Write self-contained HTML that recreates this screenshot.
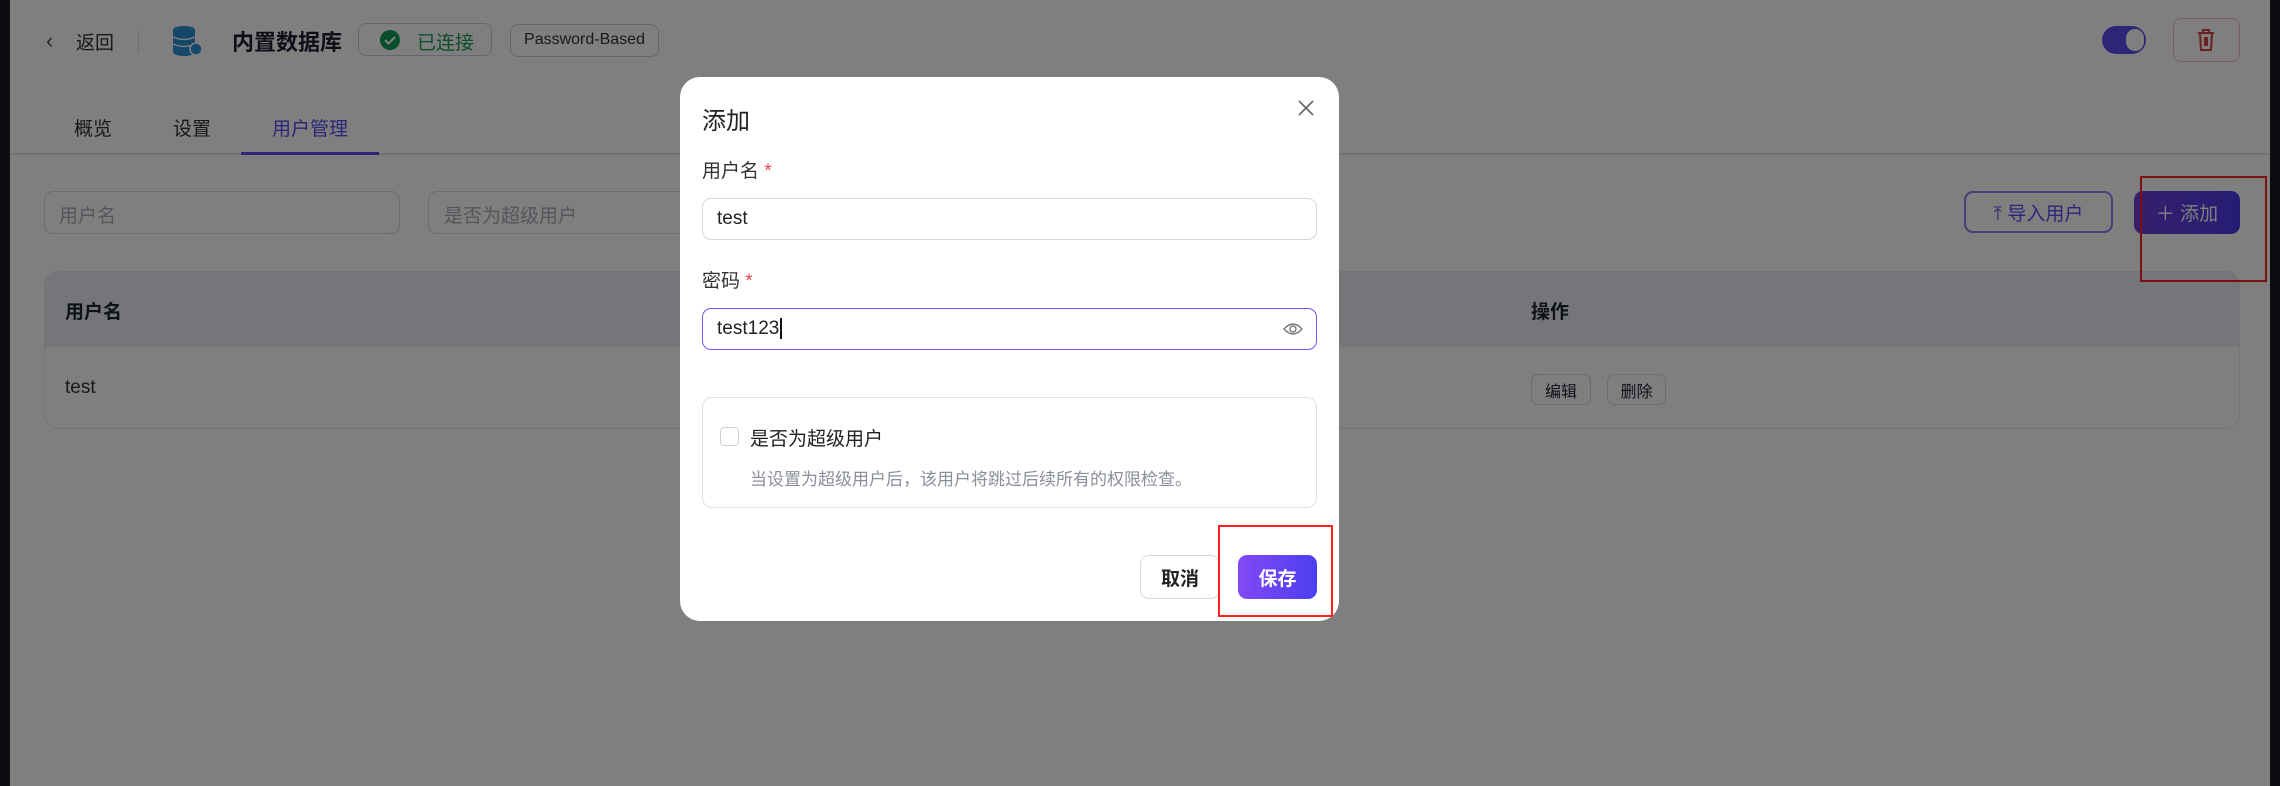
<!DOCTYPE html>
<html><head><meta charset="utf-8"><style>
*{box-sizing:border-box;margin:0;padding:0}
body{width:2280px;height:786px;overflow:hidden;position:relative;background:#fff;font-family:"Liberation Sans","Noto Sans CJK SC",sans-serif;color:#1f2333}
.a{position:absolute}
.inp{border:1.5px solid #d5d8e0;border-radius:9px;background:#fff}
.ph{color:#a9adb8;font-size:19px}
.btn{border-radius:9px;display:flex;align-items:center;justify-content:center;font-size:19px}
</style></head><body>
<div class="a" style="left:0;top:0;width:10px;height:786px;background:#161b26"></div>
<div class="a" style="right:0;top:0;width:10px;height:786px;background:#161b26"></div>
<div class="a" style="left:46px;top:28px;font-size:22px;color:#555">‹</div>
<div class="a" style="left:76px;top:28px;font-size:19px;color:#333">返回</div>
<div class="a" style="left:138px;top:30px;width:1px;height:22px;background:#ddd"></div>
<svg class="a" style="left:170px;top:25px" width="34" height="32" viewBox="0 0 34 32"><ellipse cx="14" cy="5" rx="11" ry="4" fill="#2a8fd0"/><rect x="3" y="5" width="22" height="22" fill="#2a8fd0"/><ellipse cx="14" cy="27" rx="11" ry="4" fill="#2a8fd0"/><path d="M3 12q11 5 22 0M3 19q11 5 22 0" stroke="#fff" stroke-width="1.5" fill="none"/><circle cx="26" cy="24" r="6" fill="#2a8fd0" stroke="#fff" stroke-width="1.5"/></svg>
<div class="a" style="left:232px;top:25px;font-size:22px;font-weight:bold;color:#1a1d2e">内置数据库</div>
<div class="a" style="left:358px;top:23px;width:134px;height:33px;border:1.5px solid #ccd;border-radius:8px;background:#fff"></div>
<svg class="a" style="left:380px;top:30px" width="20" height="20"><circle cx="10" cy="10" r="10" fill="#0f9d58"/><path d="M5 10l3.5 3.5L15 7" stroke="#fff" stroke-width="2" fill="none"/></svg>
<div class="a" style="left:417px;top:28px;font-size:19px;color:#1e9b5a">已连接</div>
<div class="a" style="left:510px;top:24px;width:149px;height:33px;border:1.5px solid #ccd;border-radius:8px;background:#fff;font-size:16px;color:#333;text-align:center;line-height:30px">Password-Based</div>
<div class="a" style="left:2102px;top:26px;width:44px;height:28px;border-radius:14px;background:#5b4cf0"></div>
<div class="a" style="left:2126px;top:29px;width:18px;height:22px;border-radius:11px;background:#fff"></div>
<div class="a" style="left:2173px;top:18px;width:67px;height:44px;border:1.5px solid #f3c0c0;border-radius:8px;background:#fff"></div>
<svg class="a" style="left:2196px;top:28px" width="20" height="24" viewBox="0 0 20 24" fill="none" stroke="#d84040" stroke-width="2"><path d="M2 5h16M7 5V2h6v3M4 5l1 17h10l1-17M9 9v9M11 9v9"/></svg>
<div class="a" style="left:74px;top:114px;font-size:19px;color:#333">概览</div>
<div class="a" style="left:173px;top:114px;font-size:19px;color:#333">设置</div>
<div class="a" style="left:272px;top:114px;font-size:19px;color:#5b4cf0">用户管理</div>
<div class="a" style="left:10px;top:153px;width:2260px;height:2px;background:#e3e5ea"></div>
<div class="a" style="left:241px;top:152px;width:138px;height:3px;background:#5b4cf0"></div>
<div class="a inp" style="left:44px;top:191px;width:356px;height:43px"></div>
<div class="a ph" style="left:59px;top:201px">用户名</div>
<div class="a inp" style="left:428px;top:191px;width:280px;height:43px"></div>
<div class="a ph" style="left:444px;top:201px">是否为超级用户</div>
<div class="a btn" style="left:1964px;top:191px;width:149px;height:42px;border:2px solid #8b7ff5;color:#5b4cf0;background:#fff">⤒&nbsp;导入用户</div>
<div class="a btn" style="left:2134px;top:191px;width:106px;height:43px;background:linear-gradient(90deg,#6d3fd8,#4a3ae6);color:#fff">＋&nbsp;添加</div>
<div class="a" style="left:44px;top:271px;width:2196px;height:158px;border:1.5px solid #e6e8ee;border-radius:14px;overflow:hidden;background:#fff">
<div style="height:75px;background:#eaecf2"></div></div>
<div class="a" style="left:65px;top:297px;font-size:19px;font-weight:bold">用户名</div>
<div class="a" style="left:1531px;top:297px;font-size:19px;font-weight:bold">操作</div>
<div class="a" style="left:65px;top:377px;font-size:19px;color:#333">test</div>
<div class="a btn" style="left:1531px;top:374px;width:60px;height:31px;border:1.5px solid #d5d8e0;font-size:16px;border-radius:7px">编辑</div>
<div class="a btn" style="left:1607px;top:374px;width:59px;height:31px;border:1.5px solid #d5d8e0;font-size:16px;border-radius:7px">删除</div>
<div class="a" style="left:2140px;top:176px;width:127px;height:106px;border:2px solid #ff2020"></div>
<div class="a" style="left:0;top:0;width:2280px;height:786px;background:rgba(0,0,0,0.5)"></div>
<div class="a" style="left:680px;top:77px;width:659px;height:544px;background:#fff;border-radius:20px"></div>
<div class="a" style="left:702px;top:101px;font-size:24px;color:#222">添加</div>
<svg class="a" style="left:1298px;top:100px" width="16" height="16"><path d="M1 1l14 14M15 1L1 15" stroke="#666" stroke-width="1.6"/></svg>
<div class="a" style="left:702px;top:156px;font-size:19px;color:#333">用户名 <span style="color:#e5484d">*</span></div>
<div class="a inp" style="left:702px;top:198px;width:615px;height:42px"></div>
<div class="a" style="left:717px;top:208px;font-size:19px;color:#222">test</div>
<div class="a" style="left:702px;top:266px;font-size:19px;color:#333">密码 <span style="color:#e5484d">*</span></div>
<div class="a" style="left:702px;top:308px;width:615px;height:42px;border:1.5px solid #6a5cf5;border-radius:9px"></div>
<div class="a" style="left:717px;top:318px;font-size:19px;color:#222">test123<span style="border-left:2px solid #111;margin-left:1px"></span></div>
<svg class="a" style="left:1283px;top:321px" width="20" height="16" viewBox="0 0 20 16" fill="none" stroke="#777" stroke-width="1.4"><path d="M1 8q9-10 18 0q-9 10-18 0z"/><circle cx="10" cy="8" r="3"/></svg>
<div class="a" style="left:702px;top:397px;width:615px;height:111px;border:1.5px solid #e0e2e8;border-radius:10px"></div>
<div class="a" style="left:720px;top:427px;width:19px;height:19px;border:1.5px solid #cfd2da;border-radius:4px"></div>
<div class="a" style="left:750px;top:424px;font-size:19px;color:#222">是否为超级用户</div>
<div class="a" style="left:750px;top:465px;font-size:17px;color:#8a8f9a">当设置为超级用户后，该用户将跳过后续所有的权限检查。</div>
<div class="a btn" style="left:1140px;top:555px;width:80px;height:44px;border:1.5px solid #d8dae0;color:#222;font-weight:bold;background:#fff">取消</div>
<div class="a btn" style="left:1238px;top:555px;width:79px;height:44px;background:linear-gradient(90deg,#8448f5,#4a3ff0);color:#fff;font-weight:bold">保存</div>
<div class="a" style="left:1218px;top:525px;width:115px;height:92px;border:2px solid #ff2020"></div>
</body></html>
